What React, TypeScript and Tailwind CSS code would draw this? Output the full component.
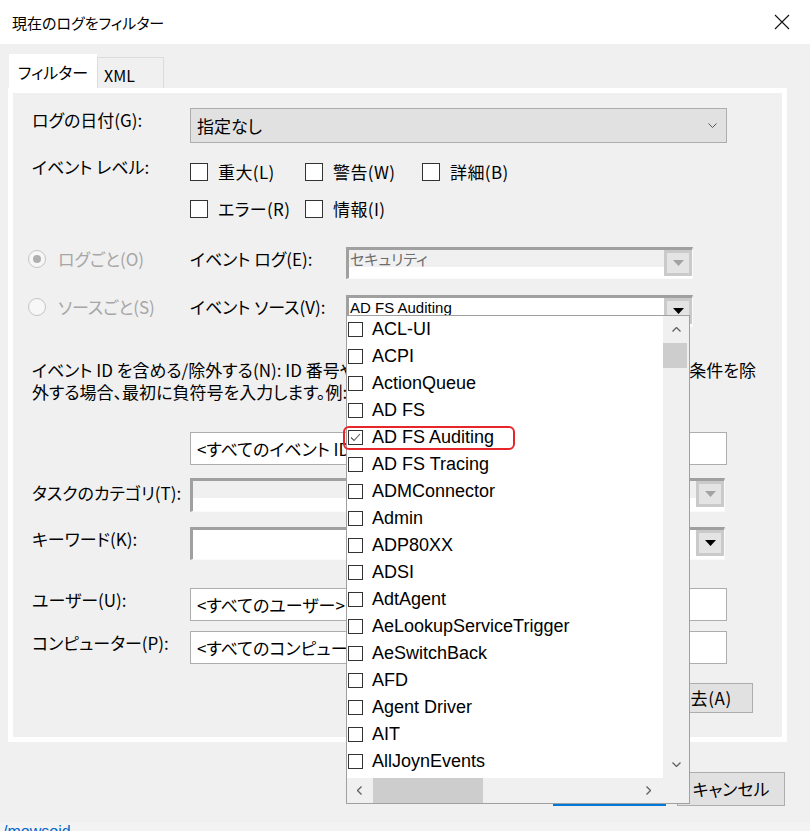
import React from 'react';

const sources = [
  'ACL-UI',
  'ACPI',
  'ActionQueue',
  'AD FS',
  'AD FS Auditing',
  'AD FS Tracing',
  'ADMConnector',
  'Admin',
  'ADP80XX',
  'ADSI',
  'AdtAgent',
  'AeLookupServiceTrigger',
  'AeSwitchBack',
  'AFD',
  'Agent Driver',
  'AIT',
  'AllJoynEvents',
];

function Check({ label }: { label: string }) {
  return (
    <div className="flex items-center h-[18px]">
      <span className="w-[18px] h-[18px] border border-[#333] bg-white shrink-0" />
      <span className="ml-[10px] text-[17px] leading-[18px] whitespace-nowrap tracking-[0.4px]">{label}</span>
    </div>
  );
}

function Radio({ label, checked }: { label: string; checked?: boolean }) {
  return (
    <div className="w-[162px] h-[24px] flex items-center text-[#a6a6a6]">
      <span className="w-[18px] h-[18px] rounded-full border border-[#c4c4c4] bg-[#f7f7f7] flex items-center justify-center shrink-0">
        {checked && <span className="w-[8px] h-[8px] rounded-full bg-[#b0b0b0]" />}
      </span>
      <span className="ml-[12px] text-[17px] leading-[24px] whitespace-nowrap">{label}</span>
    </div>
  );
}

function DropArrow({ disabled }: { disabled?: boolean }) {
  return (
    <span className="w-[28px] h-[26px] shrink-0 bg-[#e4e4e4] border-[3px] border-[#cacaca] flex items-center justify-center">
      <svg width="11" height="6" viewBox="0 0 11 6">
        <polygon points="0,0 11,0 5.5,6" fill={disabled ? '#a3a3a3' : '#000'} />
      </svg>
    </span>
  );
}

function OldCombo({
  className,
  text,
  disabled,
  grayTop,
  children,
}: {
  className: string;
  text?: string;
  disabled?: boolean;
  grayTop?: boolean;
  children?: React.ReactNode;
}) {
  return (
    <div
      className={
        'relative flex bg-white border-t-[3px] border-l-[3px] border-t-[#a0a0a0] border-l-[#a0a0a0] border-r border-b border-r-[#fafafa] border-b-[#fafafa] ' +
        className
      }
    >
      <div className="flex-1 min-w-0 flex flex-col">
        <div
          className={
            'h-[17px] pl-[1px] leading-[17px] whitespace-nowrap ' +
            (grayTop ? 'bg-[#f0f0f0] ' : 'bg-white ') +
            (disabled ? 'text-[#6d6d6d] text-[15px]' : "text-black text-[15px] font-['Liberation_Sans',sans-serif] leading-[20px]")
          }
        >
          {text}
        </div>
        <div className="flex-1 bg-white" />
      </div>
      <DropArrow disabled={disabled} />
      {children}
    </div>
  );
}

function SourceList() {
  return (
    <div className="absolute z-10 left-[-3px] top-[17px] w-[344px] h-[489px] bg-white border border-[#a0a0a0] flex flex-col">
      <div className="relative flex flex-1 min-h-0">
        <div className="w-[316px] bg-white overflow-hidden">
          {sources.map((name) => (
            <div key={name} className="h-[27px] flex items-center pl-[1px]">
              <span className="w-[15px] h-[15px] border border-[#333] bg-white flex items-center justify-center shrink-0">
                {name === 'AD FS Auditing' && (
                  <svg width="11" height="9" viewBox="0 0 11 9">
                    <polyline points="1,4.5 4,7.5 10,1" fill="none" stroke="#555" strokeWidth="1.1" />
                  </svg>
                )}
              </span>
              <span className="ml-[9px] text-[18px] leading-[27px] whitespace-nowrap font-['Liberation_Sans',sans-serif]">
                {name}
              </span>
            </div>
          ))}
        </div>
        <div className="w-[26px] bg-[#f0f0f0] flex flex-col">
          <div className="h-[27px] flex items-center justify-center">
            <svg width="9" height="5" viewBox="0 0 9 5">
              <polyline points="0.5,4.5 4.5,0.5 8.5,4.5" fill="none" stroke="#606060" strokeWidth="1.3" />
            </svg>
          </div>
          <div className="w-[24px] h-[25px] bg-[#cdcdcd]" />
          <div className="flex-1" />
          <div className="h-[27px] flex items-center justify-center">
            <svg width="9" height="5" viewBox="0 0 9 5">
              <polyline points="0.5,0.5 4.5,4.5 8.5,0.5" fill="none" stroke="#606060" strokeWidth="1.3" />
            </svg>
          </div>
        </div>
        {/* annotation round the picked item */}
        <div className="absolute left-[-4px] top-[110px] w-[172px] h-[24px] rounded-[6px] border-2 border-[#e8262a]" />
      </div>
      <div className="h-[25px] bg-[#f0f0f0] flex">
        <div className="w-[24px] flex items-center justify-center">
          <svg width="5" height="9" viewBox="0 0 5 9">
            <polyline points="4.5,0.5 0.5,4.5 4.5,8.5" fill="none" stroke="#606060" strokeWidth="1.3" />
          </svg>
        </div>
        <div className="ml-[2px] w-[110px] bg-[#cdcdcd]" />
        <div className="w-[153px]" />
        <div className="w-[24px] flex items-center justify-center">
          <svg width="5" height="9" viewBox="0 0 5 9">
            <polyline points="0.5,0.5 4.5,4.5 0.5,8.5" fill="none" stroke="#606060" strokeWidth="1.3" />
          </svg>
        </div>
      </div>
    </div>
  );
}

function Field({ label, value }: { label: string; value: string }) {
  return (
    <div className="flex items-start">
      <div className="w-[158px] text-[17px] leading-[24px] whitespace-nowrap">{label}</div>
      <div className="w-[537px] h-[33px] bg-white border border-[#adadad] pl-[6px] flex items-center text-[17px] whitespace-nowrap overflow-hidden">
        {value}
      </div>
    </div>
  );
}

export default function App() {
  return (
    <div className="w-[810px] h-[831px] overflow-hidden bg-[#f0f0f0] text-black font-['Noto_Sans_CJK_JP',sans-serif] [font-feature-settings:'palt']">
      {/* title bar */}
      <div className="h-[44px] bg-white flex items-center justify-between pl-[12px] pr-[20px]">
        <span className="text-[15px] leading-none">現在のログをフィルター</span>
        <svg width="16" height="16" viewBox="0 0 16 16">
          <path d="M1 1L15 15M15 1L1 15" stroke="#111" strokeWidth="1.1" />
        </svg>
      </div>

      {/* tabs */}
      <div className="h-[44px] flex items-end pl-[9px]">
        <div className="h-[34px] w-[88px] bg-white pl-[9px] pt-[6px] text-[16px] leading-[24px]">フィルター</div>
        <div className="h-[31px] w-[67px] border border-b-0 border-[#dcdcdc] pl-[6px] pt-[5px] text-[16px] leading-[24px]">
          XML
        </div>
      </div>

      {/* tab page */}
      <div className="ml-[8px] w-[779px] h-[654px] border-[5px] border-white pl-[19px] pt-[15px]">
        <div className="flex items-start">
          <div className="w-[158px] text-[17px] leading-[24px]">ログの日付(G):</div>
          <div className="w-[537px] h-[35px] bg-[#e1e1e1] border border-[#adadad] flex items-center justify-between pl-[6px] pr-[9px]">
            <span className="text-[17px]">指定なし</span>
            <svg width="9" height="5" viewBox="0 0 9 5">
              <polyline points="0.5,0.5 4.5,4.5 8.5,0.5" fill="none" stroke="#555" strokeWidth="1" />
            </svg>
          </div>
        </div>

        <div className="flex items-start mt-[12px]">
          <div className="w-[158px] text-[17px] leading-[24px]">イベント レベル:</div>
          <div className="pt-[8px] grid grid-cols-[115px_117px_auto] gap-y-[19px]">
            <Check label="重大(L)" />
            <Check label="警告(W)" />
            <Check label="詳細(B)" />
            <Check label="エラー(R)" />
            <Check label="情報(I)" />
          </div>
        </div>

        <div className="flex items-start mt-[29px] ml-[-4px]">
          <Radio label="ログごと(O)" checked />
          <div className="w-[156px] text-[17px] leading-[24px]">イベント ログ(E):</div>
          <OldCombo className="w-[347px] h-[32px]" text="セキュリティ" disabled grayTop />
        </div>

        <div className="flex items-start mt-[16px] ml-[-4px]">
          <Radio label="ソースごと(S)" />
          <div className="w-[156px] text-[17px] leading-[24px]">イベント ソース(V):</div>
          <OldCombo className="w-[347px] h-[32px]" text="AD FS Auditing">
            <SourceList />
          </OldCombo>
        </div>

        <div className="mt-[32px] text-[17px] leading-[22px] w-[724px]">
          <div className="flex justify-between whitespace-nowrap">
            <span>イベント ID を含める/除外する(N): ID 番号や範囲を区切ります。</span>
            <span>条件を除</span>
          </div>
          <div className="whitespace-nowrap">外する場合、最初に負符号を入力します。例: 1,3,5-99</div>
        </div>

        <div className="mt-[29px] ml-[158px] w-[537px] h-[33px] bg-white border border-[#adadad] pl-[6px] flex items-center text-[17px] whitespace-nowrap">
          &lt;すべてのイベント ID&gt;
        </div>

        <div className="flex items-start mt-[13px]">
          <div className="w-[158px] text-[17px] leading-[24px] pt-[3px]">タスクのカテゴリ(T):</div>
          <OldCombo className="w-[535px] h-[34px]" disabled grayTop />
        </div>

        <div className="flex items-start mt-[15px]">
          <div className="w-[158px] text-[17px] leading-[24px]">キーワード(K):</div>
          <OldCombo className="w-[535px] h-[33px]" />
        </div>

        <div className="mt-[28px]">
          <Field label="ユーザー(U):" value="<すべてのユーザー>" />
        </div>
        <div className="mt-[10px]">
          <Field label="コンピューター(P):" value="<すべてのコンピューター>" />
        </div>

        <div className="mt-[19px] ml-[623px] w-[98px] h-[30px] bg-[#e1e1e1] border border-[#adadad] flex items-center pl-[17px] text-[17px] tracking-[0.6px]">
          消去(A)
        </div>
      </div>

      {/* dialog buttons */}
      <div className="mt-[30px] flex justify-end gap-[11px] pr-[25px]">
        <div className="w-[113px] h-[34px] bg-[#e1e1e1] border-2 border-[#0078d7] flex items-center justify-center text-[17px]">
          OK
        </div>
        <div className="w-[108px] h-[34px] bg-[#e1e1e1] border border-[#adadad] flex items-center justify-center text-[17px]">
          キャンセル
        </div>
      </div>

      <div className="mt-[16px] h-[20px] bg-[#f3f3f3] pl-[3px] text-[16px] leading-[20px] text-[#0066cc] font-['Liberation_Sans',sans-serif]">
        /mowsoid
      </div>
    </div>
  );
}
